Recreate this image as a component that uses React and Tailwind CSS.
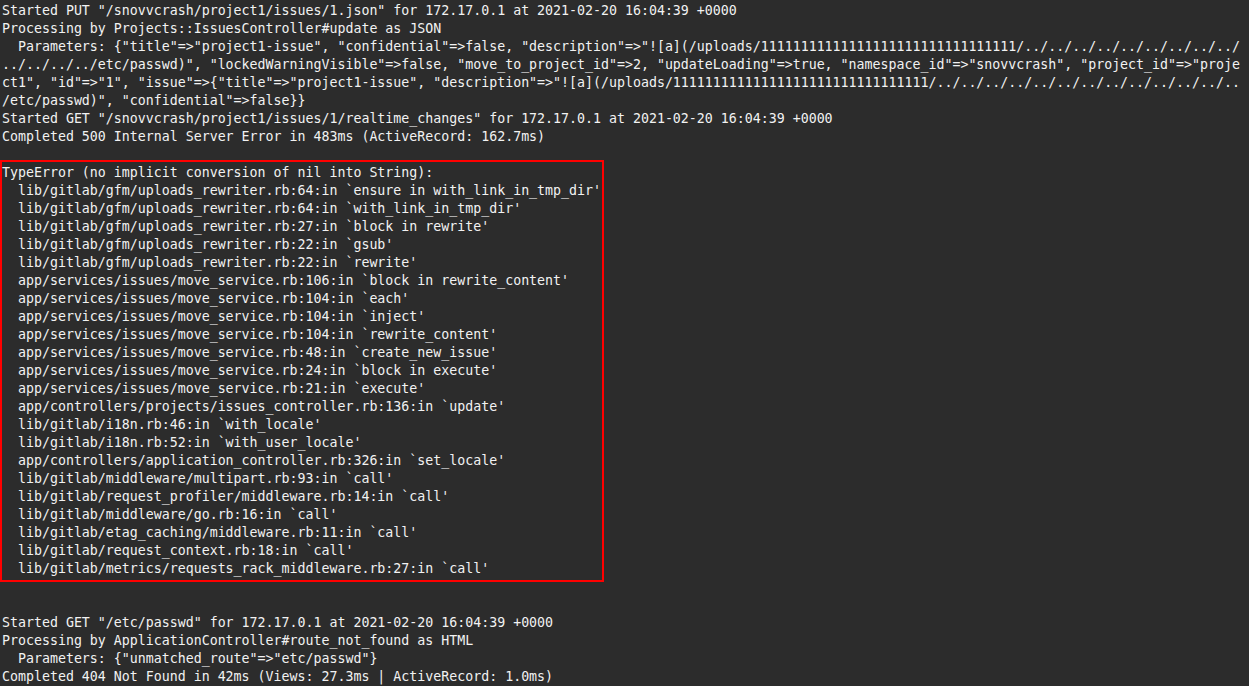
import React from 'react';

const ones = '11111111111111111111111111111111';

const head = [
  'Started PUT "/snovvcrash/project1/issues/1.json" for 172.17.0.1 at 2021-02-20 16:04:39 +0000',
  'Processing by Projects::IssuesController#update as JSON',
  `  Parameters: {"title"=>"project1-issue", "confidential"=>false, "description"=>"![a](/uploads/${ones}/../../../../../../../../../`,
  '../../../../etc/passwd)", "lockedWarningVisible"=>false, "move_to_project_id"=>2, "updateLoading"=>true, "namespace_id"=>"snovvcrash", "project_id"=>"proje',
  `ct1", "id"=>"1", "issue"=>{"title"=>"project1-issue", "description"=>"![a](/uploads/${ones}/../../../../../../../../../../../../..`,
  '/etc/passwd)", "confidential"=>false}}',
  'Started GET "/snovvcrash/project1/issues/1/realtime_changes" for 172.17.0.1 at 2021-02-20 16:04:39 +0000',
  'Completed 500 Internal Server Error in 483ms (ActiveRecord: 162.7ms)',
  '',
];

const trace = [
  'TypeError (no implicit conversion of nil into String):',
  "  lib/gitlab/gfm/uploads_rewriter.rb:64:in `ensure in with_link_in_tmp_dir'",
  "  lib/gitlab/gfm/uploads_rewriter.rb:64:in `with_link_in_tmp_dir'",
  "  lib/gitlab/gfm/uploads_rewriter.rb:27:in `block in rewrite'",
  "  lib/gitlab/gfm/uploads_rewriter.rb:22:in `gsub'",
  "  lib/gitlab/gfm/uploads_rewriter.rb:22:in `rewrite'",
  "  app/services/issues/move_service.rb:106:in `block in rewrite_content'",
  "  app/services/issues/move_service.rb:104:in `each'",
  "  app/services/issues/move_service.rb:104:in `inject'",
  "  app/services/issues/move_service.rb:104:in `rewrite_content'",
  "  app/services/issues/move_service.rb:48:in `create_new_issue'",
  "  app/services/issues/move_service.rb:24:in `block in execute'",
  "  app/services/issues/move_service.rb:21:in `execute'",
  "  app/controllers/projects/issues_controller.rb:136:in `update'",
  "  lib/gitlab/i18n.rb:46:in `with_locale'",
  "  lib/gitlab/i18n.rb:52:in `with_user_locale'",
  "  app/controllers/application_controller.rb:326:in `set_locale'",
  "  lib/gitlab/middleware/multipart.rb:93:in `call'",
  "  lib/gitlab/request_profiler/middleware.rb:14:in `call'",
  "  lib/gitlab/middleware/go.rb:16:in `call'",
  "  lib/gitlab/etag_caching/middleware.rb:11:in `call'",
  "  lib/gitlab/request_context.rb:18:in `call'",
  "  lib/gitlab/metrics/requests_rack_middleware.rb:27:in `call'",
];

const tail = [
  '',
  '',
  'Started GET "/etc/passwd" for 172.17.0.1 at 2021-02-20 16:04:39 +0000',
  'Processing by ApplicationController#route_not_found as HTML',
  '  Parameters: {"unmatched_route"=>"etc/passwd"}',
  'Completed 404 Not Found in 42ms (Views: 27.3ms | ActiveRecord: 1.0ms)',
];

const Line = ({ text }) => (
  <div className="h-[18px] leading-[18px] whitespace-pre">{text || ' '}</div>
);

export default function App() {
  return (
    <div className="w-[1249px] h-[686px] overflow-hidden bg-[#2c2c2c] text-[#f2f2f2] font-['DejaVu_Sans_Mono',monospace] text-[13.28px]">
      <div className="relative pt-[2px] pl-[2px]">
        {head.map((t, i) => <Line key={'h' + i} text={t} />)}

        {/* highlighted stack trace */}
        <div className="relative">
          <div className="absolute left-[-2px] top-[-4px] w-[604px] h-[422px] border-2 border-[#ff0000] pointer-events-none" />
          {trace.map((t, i) => <Line key={'t' + i} text={t} />)}
        </div>

        {tail.map((t, i) => <Line key={'e' + i} text={t} />)}
      </div>
    </div>
  );
}
